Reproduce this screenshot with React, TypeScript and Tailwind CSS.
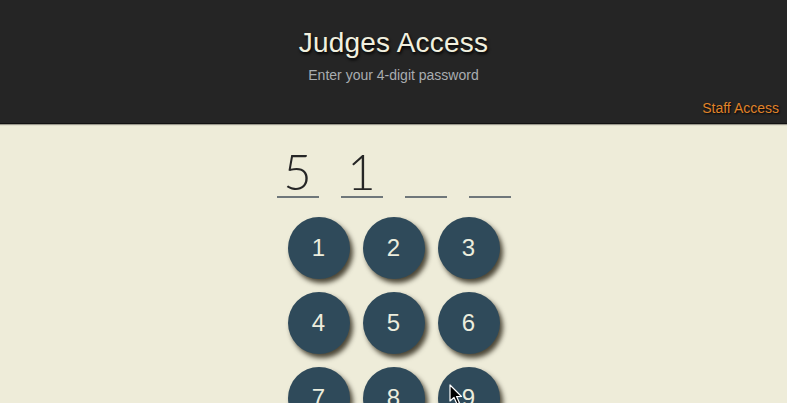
import { useState } from "react";

const keys = ["1", "2", "3", "4", "5", "6", "7", "8", "9"];

export default function App() {
  const [entered] = useState(["5", "1", "", ""]);

  return (
    <div className="relative min-h-screen h-[403px] overflow-hidden bg-[#eeecd9] font-['Liberation_Sans',Arial,sans-serif]">
      {/* Header */}
      <header className="relative h-[124px] bg-[#252525] border-b border-[#121212] shadow-[0_1px_1px_rgba(0,0,0,0.35)]">
        <div className="flex flex-col items-center pt-[26px]">
          <h1 className="text-[28px] leading-[34px] tracking-[0.2px] text-[#f1f0df] [text-shadow:1px_2px_3px_rgba(0,0,0,1)]">
            Judges Access
          </h1>
          <p className="mt-[6px] text-[14px] leading-[18px] text-[#a9adb1]">Enter your 4-digit password</p>
        </div>
        <a className="absolute right-[8px] top-[99px] text-[14px] leading-[18px] text-[#e0832a] [text-shadow:1px_1px_2px_rgba(0,0,0,1)]">
          Staff Access
        </a>
      </header>

      {/* Code entry */}
      <main className="flex flex-col items-center pt-[18px]">
        <div className="flex gap-[22px]">
          {entered.map((d, i) => (
            <div
              key={i}
              className="w-[42px] h-[56px] flex items-end justify-center border-b-2 border-[#6f777a] font-['Lato','Inter',sans-serif] font-light text-[49px] leading-[56px] text-[#262626]"
            >
              <span className="-mb-[3px]">{d}</span>
            </div>
          ))}
        </div>

        <div className="mt-[19px] grid grid-cols-3 gap-[13px]">
          {keys.map((k) => (
            <button
              key={k}
              className="w-[62px] h-[62px] rounded-full bg-[#2f4a5a] flex items-center justify-center text-[24px] text-[#eceddd] shadow-[3px_4px_5px_rgba(20,15,0,0.75)]"
            >
              {k}
            </button>
          ))}
        </div>
      </main>

      {/* mouse pointer */}
      <svg className="absolute left-[449px] top-[384px]" width="14" height="22" viewBox="0 0 14 22">
        <path d="M1 1 L1 17 L5 13.5 L8 20 L10.5 19 L7.6 12.6 L12.5 12.5 Z" fill="#000" stroke="#fff" strokeWidth="1.2" strokeLinejoin="round" />
      </svg>
    </div>
  );
}
